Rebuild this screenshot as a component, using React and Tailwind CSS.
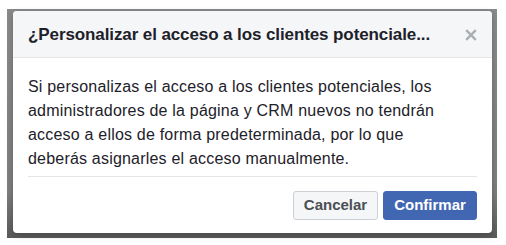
export default function App() {
  return (
    <div className="w-[506px] h-[245px] bg-white pl-[7px] pt-[9px]" style={{ fontFamily: '"Liberation Sans", Arial, sans-serif' }}>
      <div className="w-[490px] h-[229px] bg-[linear-gradient(to_bottom,#8a8a8a_0%,#7e7e7e_80%,#5a5a5a_100%)] pl-[6px] pt-[2px]">
        <div className="w-[479px] h-[222px] bg-white rounded-[4px] overflow-hidden flex flex-col shadow-[0_2px_6px_rgba(0,0,0,0.25)]">
          <div className="h-[47px] bg-[#f5f6f7] border-b border-[#e5e5e5] flex items-center justify-between pl-[15px] pr-[15px] pt-[1px]">
            <h3 className="text-[#1d2129] font-bold text-[17px] tracking-[-0.1px]">¿Personalizar el acceso a los clientes potenciale...</h3>
            <svg viewBox="0 0 12 12" className="w-[12px] h-[12px] text-[#abaeb2]">
              <path d="M1.2 1.2L10.8 10.8M10.8 1.2L1.2 10.8" stroke="currentColor" strokeWidth="2.4" strokeLinecap="butt" />
            </svg>
          </div>
          <div className="px-[15px] pt-[17px]">
            <p className="text-[#1d2129] text-[16px] tracking-[0.2px] leading-[24px] pb-[5px]">
              Si personalizas el acceso a los clientes potenciales, los<br />
              administradores de la página y CRM nuevos no tendrán<br />
              acceso a ellos de forma predeterminada, por lo que<br />
              deberás asignarles el acceso manualmente.
            </p>
            <div className="border-t border-[#e5e5e5]"></div>
            <div className="flex justify-end gap-[5px] pt-[14px]">
              <button className="h-[29px] w-[85px] bg-[#f5f6f7] border border-[#ccd0d5] rounded-[3px] text-[#4b4f56] font-bold text-[15px]">Cancelar</button>
              <button className="h-[29px] w-[94px] bg-[#4267b2] border border-[#4267b2] rounded-[3px] text-white font-bold text-[15px]">Confirmar</button>
            </div>
          </div>
        </div>
      </div>
    </div>
  );
}
